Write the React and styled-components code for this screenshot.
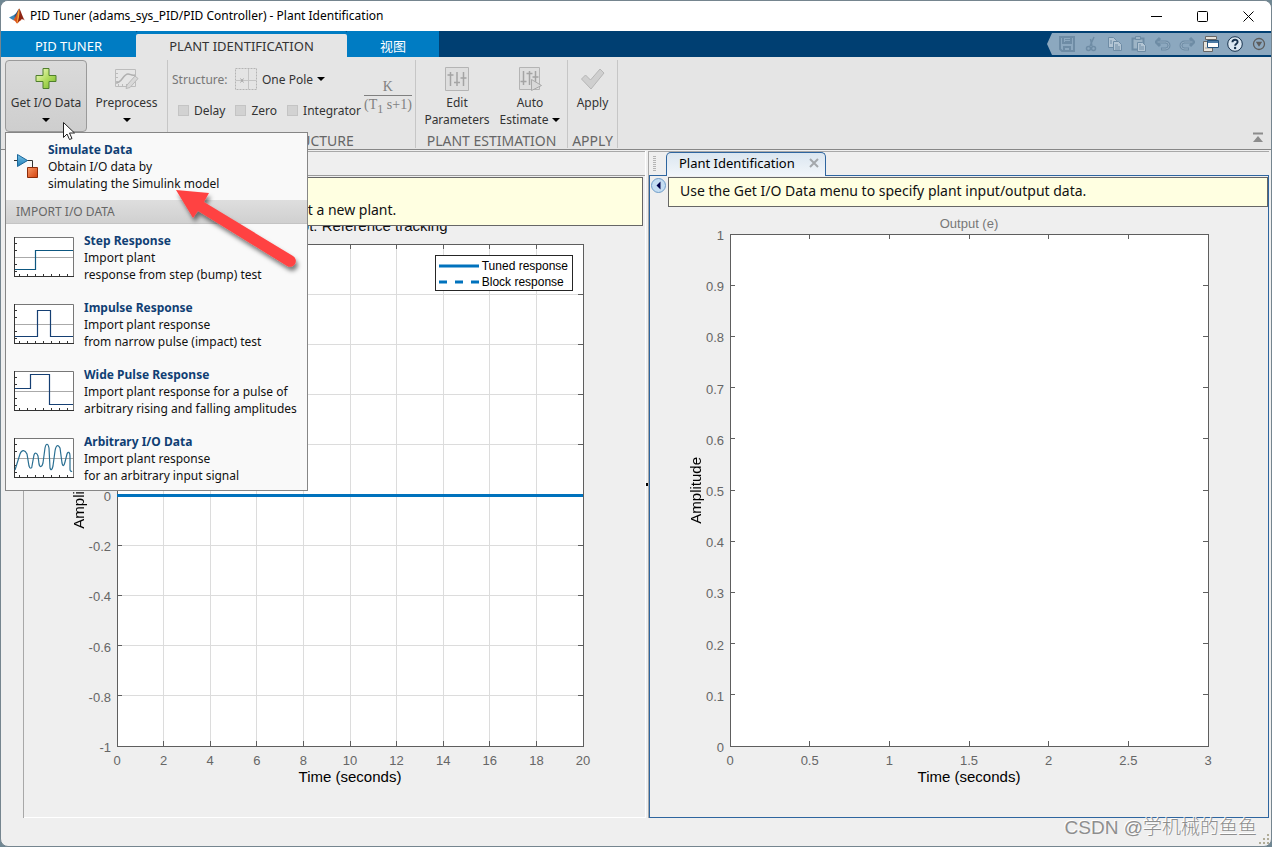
import React from 'react';
import styled, { createGlobalStyle, css } from 'styled-components';

const UI = '"Noto Sans", "Noto Sans CJK SC", sans-serif';
const PLOT = '"Liberation Sans", Arial, sans-serif';

const Global = createGlobalStyle`
  *, *::before, *::after { box-sizing: border-box; }
  body { margin: 0; background: #6f8793; font-family: ${UI}; }
  button, select, input { font: inherit; color: inherit; margin: 0; }
  button { border: 0; padding: 0; background: none; }
`;

const Window = styled.div`
  position: relative;
  display: flex;
  flex-direction: column;
  min-height: 100vh;
  border: 1px solid #75858f;
  border-radius: 8px;
  background: #efefef;
  overflow: hidden;
`;

const TitleBar = styled.header`
  display: flex;
  align-items: center;
  height: 30px;
  padding-left: 8px;
  background: #fff;
`;

const Title = styled.h1`
  flex: 1;
  margin: 0 0 0 5px;
  font-size: 12px;
  font-weight: 400;
  line-height: 20px;
  color: #000;
  white-space: nowrap;
`;

const WindowButtons = styled.div`
  display: flex;
`;

const WindowButton = styled.button`
  display: grid;
  place-items: center;
  width: 46px;
  height: 30px;
`;

const TabStrip = styled.nav`
  display: flex;
  align-items: flex-end;
  height: 26px;
  background: #003f72;
`;

const RibbonTab = styled.button`
  flex: none;
  width: ${(p) => p.$width}px;
  height: ${(p) => (p.$active ? 23 : 26)}px;
  padding-top: ${(p) => (p.$active ? 0 : 3)}px;
  border-radius: ${(p) => (p.$active ? '2px 2px 0 0' : 0)};
  background: ${(p) => (p.$active ? '#e5e5e5' : '#007cc3')};
  color: ${(p) => (p.$active ? '#333' : '#fff')};
  font-size: 13px;
  line-height: 22px;
  white-space: nowrap;
  box-shadow: ${(p) => (p.$active ? '0 -3px 0 #007cc3' : 'none')};
`;

const QuickAccess = styled.div`
  display: flex;
  align-items: center;
  align-self: center;
  height: 22px;
  margin-left: auto;
  padding-left: 8px;
  background: #8ca8bf;
  clip-path: polygon(5px 0, 100% 0, 100% 100%, 5px 100%, 0 50%);
`;

const QuickButton = styled.button`
  display: grid;
  place-items: center;
  width: 24px;
  height: 22px;
`;

const Ribbon = styled.div`
  display: flex;
  height: 93px;
  padding-left: 4px;
  border-bottom: 1px solid #868686;
  background: #e5e5e5;
`;

const Group = styled.section`
  position: relative;
  display: flex;
  flex-direction: column;
  width: ${(p) => p.$width}px;
  height: 88px;
  margin-top: 3px;
  border-right: 1px solid #c6c6c6;
`;

const GroupBody = styled.div`
  display: flex;
  flex: none;
  height: 72px;
`;

const GroupName = styled.h2`
  margin: 0;
  font-size: 14px;
  font-weight: 400;
  line-height: 18px;
  color: #666;
  text-align: center;
  white-space: nowrap;
`;

const Tool = styled.button`
  display: flex;
  flex-direction: column;
  align-items: center;
  width: ${(p) => p.$width}px;
  height: 72px;
  padding-top: 5px;
  border: 1px solid transparent;
  border-radius: 4px;
  font-size: 12px;
  line-height: 17px;
  color: #333;
  white-space: nowrap;
  ${(p) =>
    p.$pressed &&
    css`
      border-color: #9a9a9a;
      background: linear-gradient(#dadada, #cecece);
    `}
`;

const ToolIcon = styled.span`
  display: grid;
  place-items: center;
  height: 25px;
  margin-bottom: 3px;
`;

const Caret = styled.i`
  display: inline-block;
  width: 0;
  height: 0;
  margin-left: ${(p) => (p.$inline ? 4 : 0)}px;
  margin-top: ${(p) => (p.$inline ? 0 : 7)}px;
  vertical-align: 2px;
  border: 4px solid transparent;
  border-top-color: #000;
  border-bottom-width: 0;
  pointer-events: none;
`;

const StructureForm = styled.div`
  display: flex;
  flex-direction: column;
  gap: 9px;
  padding: 8px 0 0 4px;
`;

const FormRow = styled.div`
  display: flex;
  align-items: center;
  height: 22px;
  font-size: 12px;
  color: #333;
`;

const FieldLabel = styled.label`
  width: 63px;
  color: #777;
`;

const Picker = styled.span`
  display: flex;
  align-items: center;
`;

const Select = styled.select`
  margin-left: 5px;
  padding: 0;
  border: 0;
  background: none;
  appearance: none;
  field-sizing: content;
  color: #333;
`;

const Check = styled.label`
  display: flex;
  align-items: center;
  gap: 5px;
  margin-left: ${(p) => p.$gap}px;
`;

const Box = styled.input`
  appearance: none;
  width: 11px;
  height: 11px;
  border: 1px solid #c4c4c4;
  background: #d2d2d2;
`;

const Formula = styled.div`
  display: flex;
  flex-direction: column;
  align-items: center;
  padding: 18px 0 0 3px;
  font-family: "Liberation Serif", serif;
  font-size: 14px;
  line-height: 17px;
  color: #808080;
  white-space: nowrap;
`;

const Denominator = styled.span`
  border-top: 1px solid #808080;
  sub { font-size: 12px; line-height: 8px; }
`;

const Collapse = styled.button`
  align-self: flex-end;
  margin: 0 5px 8px auto;
  width: 16px;
  height: 14px;
`;

const Menu = styled.div`
  position: absolute;
  z-index: 5;
  top: 72px;
  left: 0;
  width: 303px;
  border: 1px solid #868686;
  background: #f9f9f9;
`;

const MenuItem = styled.button`
  display: flex;
  gap: 10px;
  width: 100%;
  height: 67px;
  padding: 8px 0 0 8px;
  text-align: left;
  font-size: 12px;
  line-height: 17px;
  color: #111;
  white-space: nowrap;
  &:last-child { height: 65px; }
  svg { flex: none; margin-top: ${(p) => (p.$lead ? 12 : 5)}px; }
`;

const ItemText = styled.span`
  display: flex;
  flex-direction: column;
  strong { color: #103f74; font-weight: 700; }
`;

const MenuSection = styled.div`
  height: 24px;
  padding-left: 10px;
  border-bottom: 1px solid #c4c4c4;
  background: linear-gradient(#dedede, #d0d0d0);
  font-size: 12px;
  line-height: 23px;
  color: #666;
`;

const Workspace = styled.main`
  flex: 1;
  display: grid;
  grid-template-columns: minmax(0, 622fr) 3px minmax(0, 621fr);
  padding: 1px 2px 0 22px;
`;

const Panel = styled.section`
  display: flex;
  flex-direction: column;
  border-top: 1px solid #a8a8a8;
  border-left: 1px solid #a8a8a8;
`;

const Splitter = styled.div`
  display: flex;
  align-items: center;
  border-left: 1px solid #fff;
  &::after { content: ""; width: 3px; height: 3px; background: #000; }
`;

const PanelHead = styled.div`
  display: flex;
  align-items: flex-end;
  flex: none;
  height: 24px;
  border-bottom: 1px solid ${(p) => (p.$active ? '#2e659f' : '#9a9a9a')};
`;

const Grip = styled.div`
  align-self: center;
  width: 3px;
  height: 15px;
  margin: 0 10px 0 4px;
  background: repeating-linear-gradient(#b4b4b4 0 1px, transparent 1px 2px);
`;

const DocTab = styled.div`
  display: flex;
  align-items: center;
  gap: 14px;
  height: 24px;
  margin-bottom: -1px;
  padding: 0 6px 3px 12px;
  border: 1px solid #2e659f;
  border-bottom: 0;
  border-radius: 5px 5px 0 0;
  background: linear-gradient(#dbe6f0, #f2f6fa);
  font-size: 13px;
  line-height: 20px;
  white-space: nowrap;
  button { display: grid; }
`;

const PanelBody = styled.div`
  flex: 1;
  display: flex;
  flex-direction: column;
  border: solid #2e659f;
  border-width: ${(p) => (p.$active ? '0 1px 1px' : 0)};
  border-bottom: 1px solid ${(p) => (p.$active ? '#2e659f' : '#fff')};
`;

const NoticeRow = styled.div`
  position: relative;
  z-index: 1;
  display: flex;
  align-items: flex-start;
  gap: 2px;
  padding: 1px ${(p) => p.$end}px 0 1px;
`;

const Notice = styled.p`
  flex: 1;
  margin: 0;
  padding: ${(p) => p.$pad};
  border: 1px solid #666;
  background: #ffffe1;
  font-size: 14px;
  line-height: 20px;
  color: #111;
  white-space: nowrap;
  overflow: hidden;
`;

const BackButton = styled.button`
  display: grid;
  margin-top: 1px;
`;

const Figure = styled.figure`
  flex: 1;
  display: grid;
  grid-template: ${(p) => p.$head}px minmax(260px, 1fr) 71px / ${(p) => p.$left}px minmax(0, 1fr) ${(p) => p.$right}px;
  margin: 0;
  margin-top: ${(p) => p.$tuck}px;
  font-family: ${PLOT};
`;

const FigureTitle = styled.figcaption`
  grid-area: 1 / 2;
  align-self: ${(p) => p.$align};
  padding-bottom: 1px;
  font-size: ${(p) => p.$size}px;
  line-height: 18px;
  color: ${(p) => p.$color};
  text-align: center;
  white-space: nowrap;
`;

const YTitle = styled.div`
  grid-area: 2 / 1;
  align-self: center;
  justify-self: end;
  margin-right: ${(p) => p.$gap}px;
  writing-mode: vertical-rl;
  transform: rotate(180deg);
  font-size: 15px;
  line-height: 18px;
`;

const XTitle = styled.div`
  grid-area: 3 / 2;
  padding-top: 22px;
  text-align: center;
  font-size: 15px;
  line-height: 18px;
`;

const PlotArea = styled.div`
  position: relative;
  grid-area: 2 / 2;
`;

const PlotSvg = styled.svg`
  position: absolute;
  inset: 0;
  width: 100%;
  height: 100%;
  overflow: visible;
  font-size: 13px;
  fill: #666;
  line { shape-rendering: crispEdges; }
`;

const Legend = styled.ul`
  position: absolute;
  top: 11px;
  right: 10px;
  margin: 0;
  padding: 2px 4px 0 3px;
  height: 36px;
  border: 1px solid #262626;
  background: #fff;
  list-style: none;
  font-size: 12px;
  line-height: 16px;
  li { display: flex; align-items: center; gap: 3px; white-space: nowrap; }
`;

const StatusBar = styled.footer`
  display: flex;
  justify-content: flex-end;
  align-items: flex-start;
  height: 28px;
  padding-right: 1px;
`;

const Watermark = styled.span`
  font-size: 19px;
  line-height: 20px;
  font-family: "Liberation Sans", "Noto Sans CJK SC", sans-serif;
  font-weight: 300;
  color: #8e8e8e;
  text-shadow: -1px -1px 0 #fff;
`;

const Annotation = styled.svg`
  position: absolute;
  z-index: 8;
  left: ${(p) => p.$x}px;
  top: ${(p) => p.$y}px;
  pointer-events: none;
`;

function MatlabLogo() {
  return (
    <svg width="16" height="16" viewBox="0 0 16 16" aria-hidden="true">
      <path d="M0 9.500 5 7l2 2.200-2.600 3z" fill="#3b86b8" />
      <path d="M5 7c2-.6 3-4 5-6.500L8 9.500 6.500 11z" fill="#215a86" />
      <path d="M10.200.4C8.600 2.500 8.400 5 6.500 8.500L4.400 12.200c2 .4 2.500 2.800 3.800 3.300 1.500-.5 2.300-3.300 4-3.200z" fill="#d9541e" />
      <path d="M10.200.4c1.500 1.600 3.200 8.400 5.600 12-1.300-.8-2.400-1.500-3.600-.9L9 14z" fill="#8e2413" />
      <path d="M10.200.4c.6 3 .2 7.600-1 11.600L8 15.500c-.7-1 1-6 .6-9.500z" fill="#f5a93b" />
    </svg>
  );
}

const quickIcons = [
  ['Save', <g key="a" fill="none" stroke="#6e8ca5" strokeWidth="2"><path d="M1 1h14v14H3l-2-2z" /><path d="M4 1v6h8V1M5 15v-4h6v4" /><path d="M6 3.500h5M6 5.500h5" strokeWidth="1" /></g>],
  ['Cut', <g key="a" fill="none" stroke="#6e8ca5" strokeWidth="1.500"><path d="M11 1 7 10M7.500 3 9 10" /><circle cx="5.500" cy="12.500" r="2" /><circle cx="10.500" cy="12.500" r="2" /></g>],
  ['Copy', <g key="a" fill="#b3c5d4" stroke="#6e8ca5"><path d="M1.500 1.500h5l3 3v7h-8z" /><path d="M6.500 5.500h5l3 3v6h-8z" /><path d="M3 5h2M3 7h2M8 9h3M8 11h5M8 13h5" /></g>],
  ['Paste', <g key="a" fill="#9db4c6" stroke="#6e8ca5"><path d="M1.500 2.500h11v11h-11z" strokeWidth="2" /><path d="M4.500.5h5v3h-5z" /><path d="M6.500 6.500h5l3 3v6h-8z" fill="#b3c5d4" /><path d="M8 9h2M8 11h5M8 13h5" /></g>],
  ['Undo', <g key="a" fill="none"><path d="M2 6h8.500a3.500 3.500 0 0 1 0 7H6M5 2 1 6l4 4" stroke="#6e8ca5" strokeWidth="3" /><path d="M2.500 6h8a3.500 3.500 0 0 1 0 7H7" stroke="#94adc2" strokeWidth="1" /></g>],
  ['Redo', <g key="a" fill="none"><path d="M14 6H5.500a3.500 3.500 0 0 0 0 7H10M11 2l4 4-4 4" stroke="#6e8ca5" strokeWidth="3" /><path d="M13.500 6h-8a3.500 3.500 0 0 0 0 7H9" stroke="#94adc2" strokeWidth="1" /></g>],
  ['Switch windows', <g key="a"><path d="M2.500.5h11v3h-11zM.5 5.500h9v10h-9z" fill="#e8e4dc" stroke="#666" /><path d="M2 12h7" stroke="#999" /><path d="M4.500 4.500h11v7h-11z" fill="#fff" stroke="#23527c" /><path d="M5 6h10" stroke="#4c7ba6" strokeWidth="2" /></g>],
  ['Help', <g key="a"><circle cx="8" cy="8" r="7.300" fill="#dbe8f2" stroke="#17324d" /><path d="M5.400 6.300C5.500 3 10.700 3 10.600 6c0 1.800-2.400 1.700-2.500 3.800" fill="none" stroke="#17324d" strokeWidth="1.900" /><circle cx="8.100" cy="12" r="1.200" fill="#17324d" /></g>],
  ['More', <g key="a"><circle cx="8" cy="8" r="5.500" fill="none" stroke="#5c5c5c" strokeWidth="1.300" /><path d="M4.800 5.800h6.400L8 10.800z" fill="#5c5c5c" /></g>],
];

function PlusIcon() {
  return (
    <svg width="24" height="24" viewBox="0 0 24 24" aria-hidden="true">
      <defs>
        <linearGradient id="plus" x1="0" y1="0" x2="1" y2="1">
          <stop offset="0" stopColor="#f6fccf" />
          <stop offset=".5" stopColor="#b5de62" />
          <stop offset="1" stopColor="#74b82a" />
        </linearGradient>
      </defs>
      <path d="M9 1.500h6v7h7v6h-7v7h-6v-7h-7v-6h7z" fill="url(#plus)" stroke="#4f7f2c" />
    </svg>
  );
}

function PreprocessIcon() {
  return (
    <svg width="25" height="22" viewBox="0 0 25 22" fill="none" aria-hidden="true">
      <path d="M1.500 1.500h20v17h-20z" fill="#e6e6e6" stroke="#bcbcbc" />
      <path d="M4.500 18v-2M8.500 18v-2M12.500 18v-2M2 5.500h2M2 9.500h2M2 13.500h2" stroke="#bcbcbc" />
      <path d="M2 15c6 0 7-9 12-9 3 0 3 2 7 1" stroke="#b0b0b0" strokeWidth="1.500" />
      <path d="m13 17 8-9 3 2.500-8 9-4 1z" fill="#d8d8d8" stroke="#b8b8b8" />
    </svg>
  );
}

function SlidersIcon({ play }) {
  return (
    <svg width="26" height="26" viewBox="0 0 26 26" fill="none" aria-hidden="true">
      <path d={play ? 'M2.500 1.500h20v22h-20z' : 'M1.500 1.500h23v23h-23z'} fill="#dedede" stroke="#b4b4b4" />
      {play ? (
        <path d="M6.500 5v14M3.500 15.500h6M12.500 5v14M9.500 7.500h6M18.500 5v12M15.500 11h6" stroke="#a4a4a4" strokeWidth="1.500" />
      ) : (
        <path d="M6.500 6v14M3.500 9h6M13 6v14M10 16.500h6M19.500 6v14M16.500 12h6" stroke="#a4a4a4" strokeWidth="1.500" />
      )}
      {play && <path d="M14.500 13.500v11l10-5z" fill="#d8d8d8" stroke="#a8a8a8" />}
    </svg>
  );
}

function ApplyIcon() {
  return (
    <svg width="26" height="24" viewBox="0 0 26 24" aria-hidden="true">
      <path d="m1.500 12 4-4 5 5L20 2l4 4-13 16z" fill="#cfcfcf" stroke="#b6b6b6" />
    </svg>
  );
}

function PoleMapIcon() {
  return (
    <svg width="22" height="22" viewBox="0 0 22 22" fill="none" aria-hidden="true">
      <path d="M.5.5h21v21H.5z" fill="#e4e4e4" stroke="#b4b4b4" strokeDasharray="2 1" />
      <path d="M13.500 1v20M1 12.500h20" stroke="#c4c4c4" />
      <path d="m5.500 10.500 3 4m0-4-3 4" stroke="#a4a4a4" />
    </svg>
  );
}

function SimulateIcon() {
  return (
    <svg width="24" height="26" viewBox="0 0 24 26" aria-hidden="true">
      <defs>
        <linearGradient id="blk" x1="0" y1="0" x2="1" y2="1">
          <stop offset="0" stopColor="#f79a68" />
          <stop offset="1" stopColor="#d4410c" />
        </linearGradient>
        <linearGradient id="gain" x1="0" y1="0" x2="0" y2="1">
          <stop offset="0" stopColor="#7cc4ea" />
          <stop offset="1" stopColor="#1d7db5" />
        </linearGradient>
      </defs>
      <path d="M0 7.500h18.500V14" fill="none" stroke="#333" />
      <path d="M3.500 1.500v12l10-6z" fill="url(#gain)" stroke="#1a679a" />
      <path d="M13.500 14.500h10v10h-10z" fill="url(#blk)" stroke="#8c2c0a" />
    </svg>
  );
}

function Thumb({ d, color }) {
  return (
    <svg width="60" height="40" viewBox="0 0 60 40" fill="none" aria-hidden="true">
      <path d="M.5.5h59v39H.5z" fill="#fff" stroke="#777" />
      <path d="M1 20.500h58" stroke="#aaa" />
      <path d="M0 39.500h60M.5 0v40M5.500 39v-2M13.500 39v-2M21.500 39v-2M29.500 39v-2M37.500 39v-2M45.500 39v-2M53.500 39v-2M1 6.500h2M1 13.500h2M1 27.500h2M1 34.500h2" stroke="#333" />
      <path d={d} stroke={color} strokeWidth="1.200" />
    </svg>
  );
}

const imports = [
  ['Step Response', 'Import plant', 'response from step (bump) test', 'M1 32.500h20.500v-19H59', '#0d5780'],
  ['Impulse Response', 'Import plant response', 'from narrow pulse (impact) test', 'M1 32.500h22.500v-26h13v26H59', '#153f73'],
  ['Wide Pulse Response', 'Import plant response for a pulse of', 'arbitrary rising and falling amplitudes', 'M1 17.500h15.500v-14h19v30H59', '#153f73'],
  ['Arbitrary I/O Data', 'Import plant response', 'for an arbitrary input signal',
    'M1 32 6 16c2-5 5-4 7 0l2 12c1 3 3 3 3 0l2-11c1-3 3-2 4 1l1 8c1 4 3 3 4-1l2-15c1-5 3-5 4 0l1 20c1 3 2 2 3-2l2-15c1-6 3-7 5-3l2 15c1 4 2 3 3-1l2-8c1-3 3-2 3 2v13c0 2 1 3 2 2', '#2a6f92'],
];

function Plot({ xTicks, yTicks, grid, line }) {
  const xs = xTicks.map((t, i) => [t, `${(i * 100) / (xTicks.length - 1)}%`]);
  const ys = yTicks.map((t, i) => [t, `${100 - (i * 100) / (yTicks.length - 1)}%`]);
  return (
    <PlotSvg>
      <rect width="100%" height="100%" fill="#fff" />
      {grid && xs.slice(1, -1).map(([, x]) => <line key={x} x1={x} x2={x} y1="0" y2="100%" stroke="#dcdcdc" />)}
      {grid && ys.slice(1, -1).map(([, y]) => <line key={y} x1="0" x2="100%" y1={y} y2={y} stroke="#dcdcdc" />)}
      <rect width="100%" height="100%" fill="none" stroke="#5e5e5e" shapeRendering="crispEdges" />
      {xs.map(([t, x]) => (
        <g key={x}>
          <line x1={x} x2={x} y1="0" y2="5" stroke="#5e5e5e" />
          <svg x={x} y="100%" overflow="visible">
            <line x1="0" x2="0" y1="0" y2="-5" stroke="#5e5e5e" />
            <text y="19" textAnchor="middle">{t}</text>
          </svg>
        </g>
      ))}
      {ys.map(([t, y]) => (
        <g key={y}>
          <line x1="0" x2="5" y1={y} y2={y} stroke="#5e5e5e" />
          <svg x="100%" y={y} overflow="visible"><line x1="0" x2="-5" y1="0" y2="0" stroke="#5e5e5e" /></svg>
          {t && <text x="-6" y={y} dy="6" textAnchor="end">{t}</text>}
        </g>
      ))}
      {line && <line x1="0" x2="100%" y1="50%" y2="50%" stroke="#0072bd" strokeWidth="3" />}
    </PlotSvg>
  );
}

export default function App() {
  return (
    <>
      <Global />
      <Window>
        <TitleBar>
          <MatlabLogo />
          <Title>PID Tuner (adams_sys_PID/PID Controller) - Plant Identification</Title>
          <WindowButtons>
            <WindowButton aria-label="Minimize"><svg width="11" height="11"><path d="M0 5.500h11" stroke="#000" /></svg></WindowButton>
            <WindowButton aria-label="Maximize"><svg width="11" height="11"><rect x=".5" y=".5" width="10" height="10" rx="1" fill="none" stroke="#000" /></svg></WindowButton>
            <WindowButton aria-label="Close"><svg width="11" height="11"><path d="m.5.5 10 10m0-10-10 10" stroke="#000" /></svg></WindowButton>
          </WindowButtons>
        </TitleBar>

        <TabStrip>
          <RibbonTab $width={135}>PID TUNER</RibbonTab>
          <RibbonTab $width={211} $active>PLANT IDENTIFICATION</RibbonTab>
          <RibbonTab $width={92}>视图</RibbonTab>
          <QuickAccess>
            {quickIcons.map(([name, art]) => (
              <QuickButton key={name} aria-label={name}>
                <svg width="16" height="16" viewBox="0 0 16 16">{art}</svg>
              </QuickButton>
            ))}
          </QuickAccess>
        </TabStrip>

        <Ribbon>
          <Group $width={163}>
            <GroupBody>
              <Tool $width={82} $pressed>
                <ToolIcon><PlusIcon /></ToolIcon>
                <span>Get I/O Data</span>
                <Caret />
              </Tool>
              <Tool $width={79}>
                <ToolIcon><PreprocessIcon /></ToolIcon>
                <span>Preprocess</span>
                <Caret />
              </Tool>
            </GroupBody>
            <Menu>
              <MenuItem $lead>
                <SimulateIcon />
                <ItemText><strong>Simulate Data</strong><span>Obtain I/O data by</span><span>simulating the Simulink model</span></ItemText>
              </MenuItem>
              <MenuSection>IMPORT I/O DATA</MenuSection>
              {imports.map(([name, a, b, d, color]) => (
                <MenuItem key={name}>
                  <Thumb d={d} color={color} />
                  <ItemText><strong>{name}</strong><span>{a}</span><span>{b}</span></ItemText>
                </MenuItem>
              ))}
            </Menu>
          </Group>
          <Group $width={248}>
            <GroupBody>
              <StructureForm>
                <FormRow>
                  <FieldLabel htmlFor="structure">Structure:</FieldLabel>
                  <PoleMapIcon />
                  <Picker>
                    <Select id="structure" defaultValue="One Pole"><option>One Pole</option></Select>
                    <Caret $inline />
                  </Picker>
                </FormRow>
                <FormRow>
                  <Check $gap={6}><Box type="checkbox" disabled />Delay</Check>
                  <Check $gap={10}><Box type="checkbox" disabled />Zero</Check>
                  <Check $gap={10}><Box type="checkbox" disabled />Integrator</Check>
                </FormRow>
              </StructureForm>
              <Formula>
                <span>K</span>
                <Denominator>(T<sub>1</sub> s+1)</Denominator>
              </Formula>
            </GroupBody>
            <GroupName>PLANT STRUCTURE</GroupName>
          </Group>
          <Group $width={152}>
            <GroupBody>
              <Tool $width={82}>
                <ToolIcon><SlidersIcon /></ToolIcon>
                <span>Edit</span>
                <span>Parameters</span>
              </Tool>
              <Tool $width={64}>
                <ToolIcon><SlidersIcon play /></ToolIcon>
                <span>Auto</span>
                <span>Estimate<Caret $inline /></span>
              </Tool>
            </GroupBody>
            <GroupName>PLANT ESTIMATION</GroupName>
          </Group>
          <Group $width={50}>
            <GroupBody>
              <Tool $width={49}>
                <ToolIcon><ApplyIcon /></ToolIcon>
                <span>Apply</span>
              </Tool>
            </GroupBody>
            <GroupName>APPLY</GroupName>
          </Group>
          <Collapse aria-label="Collapse ribbon">
            <svg width="12" height="12"><path d="M1 1.500h10" stroke="#8c8c8c" strokeWidth="2" /><path d="m6 4 5 6H1z" fill="#8c8c8c" /></svg>
          </Collapse>
        </Ribbon>

        <Workspace>
          <Panel>
            <PanelHead />
            <PanelBody>
              <NoticeRow $end={2}>
                <Notice $pad="22px 12px 5px 241px">Import a new plant.</Notice>
              </NoticeRow>
              <Figure $head={27} $left={93} $right={62} $tuck={-9}>
                <FigureTitle $size={15} $color="#111" $align="start">Step Plot: Reference tracking</FigureTitle>
                <YTitle $gap={29}>Amplitude</YTitle>
                <PlotArea>
                  <Plot
                    grid
                    line
                    xTicks={['0', '2', '4', '6', '8', '10', '12', '14', '16', '18', '20']}
                    yTicks={['-1', '-0.8', '-0.6', '-0.4', '-0.2', '0', '', '', '', '', '']}
                  />
                  <Legend>
                    <li><svg width="40" height="4"><path d="M0 2h40" stroke="#0072bd" strokeWidth="3" /></svg>Tuned response</li>
                    <li><svg width="40" height="4"><path d="M0 2h40" stroke="#0072bd" strokeWidth="3" strokeDasharray="8 8" /></svg>Block response</li>
                  </Legend>
                </PlotArea>
                <XTitle>Time (seconds)</XTitle>
              </Figure>
            </PanelBody>
          </Panel>
          <Splitter />
          <Panel>
            <PanelHead $active>
              <Grip />
              <DocTab>
                Plant Identification
                <button aria-label="Close tab"><svg width="10" height="10"><path d="m1 1 8 8m0-8-8 8" stroke="#a4a8ac" strokeWidth="2" /></svg></button>
              </DocTab>
            </PanelHead>
            <PanelBody $active>
              <NoticeRow $end={0}>
                <BackButton aria-label="Show data browser">
                  <svg width="15" height="15"><circle cx="7.500" cy="7.500" r="7" fill="#c4ddf2" stroke="#6f9cc8" /><path d="M9.500 3.500v8l-4-4z" fill="#00004a" /></svg>
                </BackButton>
                <Notice $pad="3px 11px 5px">Use the Get I/O Data menu to specify plant input/output data.</Notice>
              </NoticeRow>
              <Figure $head={27} $left={80} $right={60} $tuck={0}>
                <FigureTitle $size={13} $color="#777" $align="end">Output (e)</FigureTitle>
                <YTitle $gap={25}>Amplitude</YTitle>
                <PlotArea>
                  <Plot
                    xTicks={['0', '0.5', '1', '1.5', '2', '2.5', '3']}
                    yTicks={['0', '0.1', '0.2', '0.3', '0.4', '0.5', '0.6', '0.7', '0.8', '0.9', '1']}
                  />
                </PlotArea>
                <XTitle>Time (seconds)</XTitle>
              </Figure>
            </PanelBody>
          </Panel>
        </Workspace>

        <StatusBar>
          <Watermark>CSDN @学机械的鱼鱼</Watermark>
          <svg width="13" height="28" aria-hidden="true"><path d="M10 17h2M6 21h2M10 21h2M2 25h2M6 25h2M10 25h2" stroke="#b0ac98" strokeWidth="2" /></svg>
        </StatusBar>

        <Annotation $x={164} $y={179} width="140" height="100" aria-hidden="true">
          <defs>
            <filter id="drop" x="-20%" y="-20%" width="150%" height="150%">
              <feDropShadow dx="2" dy="4" stdDeviation="2" floodColor="#000" floodOpacity=".5" />
            </filter>
          </defs>
          <path d="M11 10 44 13l-5 9 89 54a5.500 5.500 0 0 1-6 10L33 31l-5 7z" fill="#ff4343" filter="url(#drop)" />
        </Annotation>
        <Annotation $x={61} $y={120} width="14" height="20" aria-hidden="true">
          <path d="M1.500 1.500v15l3.500-3.500 2.500 5.500 2.500-1-2.500-5.500h5z" fill="#fff" stroke="#222" />
        </Annotation>
      </Window>
    </>
  );
}
